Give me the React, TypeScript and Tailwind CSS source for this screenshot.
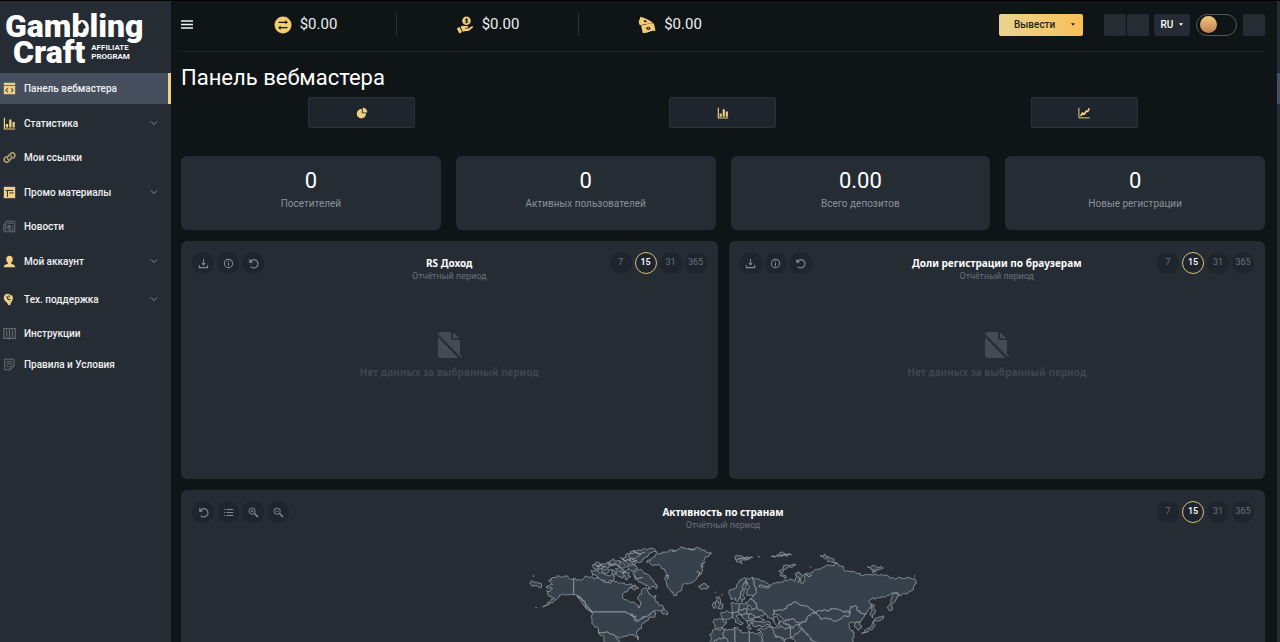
import { useState } from "react";
import type { ReactNode } from "react";

/* ---------- icons ---------- */

type IconName =
  | "panel" | "bars" | "link" | "layout" | "news" | "user" | "support" | "book" | "rules"
  | "pie" | "trend" | "download" | "info" | "undo" | "list" | "zoomIn" | "zoomOut";

const shapes: Record<IconName, ReactNode> = {
  panel: (
    <>
      <path d="M1 1h14v3H1zM1 5h14v10H1z" fill="currentColor" />
      <path d="M6 7.500 3.600 10 6 12.500M10 7.500 12.400 10 10 12.500" stroke="#464f5d" strokeWidth="1.300" fill="none" />
    </>
  ),
  bars: (
    <path d="M1 1h1.500v13H15v1.300H1zM3.500 8.500h2.800V13H3.500zM7.600 3h2.800v10H7.600zM11.700 6h2.800v7h-2.800z" fill="currentColor" />
  ),
  link: (
    <g fill="none" stroke="currentColor" strokeWidth="1.900" strokeLinecap="round">
      <path d="M6.300 10.300 A3 3 0 0 1 6.400 6.200L9.600 3A3.100 3.100 0 0 1 14 7.300L12.300 9" />
      <path d="M9.700 5.800A3 3 0 0 1 9.600 9.900L6.400 13A3.100 3.100 0 0 1 2 8.700L3.700 7" />
    </g>
  ),
  layout: (
    <>
      <path d="M1 1h14v14H1z" fill="currentColor" />
      <path d="M3 5.500h10M5.500 6v7.500M8 8.500h5" stroke="#252c34" strokeWidth="1.200" />
    </>
  ),
  news: (
    <>
      <path
        d="M3.500 1.500h11v13H2.500a1.500 1.500 0 0 1-1.500-1.500V5h2.500zM3.500 5v8M5.500 4h7M11 7.500h2M11 10h2M6 12.300h7"
        fill="none" stroke="currentColor" strokeWidth="1.200"
      />
      <path d="M5.500 6.500h4v4h-4z" fill="currentColor" />
    </>
  ),
  user: (
    <path
      d="M8 1c2.500 0 4 1.800 4 4.200 0 2-.9 3.600-2 4.300v1.200c2 .6 5 1.300 5 4.300H1c0-3 3-3.700 5-4.300V9.500C4.900 8.800 4 7.200 4 5.200 4 2.800 5.500 1 8 1z"
      fill="currentColor"
    />
  ),
  support: (
    <>
      <path d="M3 1.500 6.500 1 9 2l2.500 1.500C13 6 12 10 9.500 12.500c0 1.500-.7 2.500-2 2.500-1.300-.2-2-1.500-2.500-3C2 10.500 0 6.500 1.500 3.500z" fill="currentColor" />
      <path d="M5 3.500c-.3 3 1 5.200 4.500 4.700M7.500 2.800v2.700" stroke="#252c34" strokeWidth="1.300" fill="none" />
    </>
  ),
  book: (
    <path
      d="M1 2h5.500L8 3l1.500-1H15v12H9.500L8 15l-1.500-1H1zM8 3v12M4.500 4v8M11.500 4v8"
      fill="none" stroke="currentColor" strokeWidth="1.400"
    />
  ),
  rules: (
    <path
      d="M2 1.500h11.500V10L9 14.500H2zM9 14.500V10h4.500M4 4.500h7.500M4 7.200h7.500M4 10h3"
      fill="none" stroke="currentColor" strokeWidth="1.200"
    />
  ),
  pie: (
    <>
      <path d="M7.800 2.800V8.200H13.300A6.200 6.200 0 1 1 7.800 2.800z" fill="currentColor" />
      <path d="M9 1a6 6 0 0 1 6 6.200H9z" fill="currentColor" />
    </>
  ),
  trend: (
    <>
      <path d="M1.200 1v13.500H15.500" fill="none" stroke="currentColor" strokeWidth="1.300" />
      <path d="m3.500 12 2.500-4 2.700 1.200L11 5.500l2 .3 2-4" fill="none" stroke="currentColor" strokeWidth="2.200" />
    </>
  ),
  download: (
    <path d="M2 10v4h12v-4M8 1.500v8M5.500 7.500 8 10l2.500-2.500" fill="none" stroke="currentColor" strokeWidth="1.500" />
  ),
  info: (
    <g fill="none" stroke="currentColor" strokeWidth="1.500">
      <circle cx="8" cy="8" r="6" />
      <path d="M8 7v4.500M8 4.500v1.300" />
    </g>
  ),
  undo: (
    <path d="M2.500 2v4h4M3 6a6 6 0 1 1 1 6.500" fill="none" stroke="currentColor" strokeWidth="1.700" />
  ),
  list: (
    <path d="M1.500 3.500H3M5 3.500h10M1.500 8H3M5 8h10M1.500 12.500H3M5 12.500h10" stroke="currentColor" strokeWidth="1.500" />
  ),
  zoomIn: (
    <g fill="none" stroke="currentColor" strokeWidth="1.400">
      <circle cx="6" cy="6" r="4.500" />
      <path d="M6 4v4M4 6h4" />
      <path d="m9.500 9.500 5 5" strokeWidth="2.400" />
    </g>
  ),
  zoomOut: (
    <g fill="none" stroke="currentColor" strokeWidth="1.400">
      <circle cx="6" cy="6" r="4.500" />
      <path d="M4 6h4" />
      <path d="m9.500 9.500 5 5" strokeWidth="2.400" />
    </g>
  ),
};

function Icon({ name, className = "size-3" }: { name: IconName; className?: string }) {
  return (
    <svg viewBox="0 0 16 16" aria-hidden="true" className={className}>
      {shapes[name]}
    </svg>
  );
}

function ExchangeIcon() {
  return (
    <svg viewBox="0 0 18 18" aria-hidden="true" className="size-[18px]">
      <circle cx="9" cy="9" r="8.500" fill="#f3cb74" />
      <path d="M4.500 6.300h7.500M6 11.700h7.500" stroke="#14191b" strokeWidth="1.300" />
      <path d="M11.300 4.300 14 6.300l-2.700 2zM6.700 9.700 4 11.700l2.700 2z" fill="#14191b" />
    </svg>
  );
}

function HandCoinIcon() {
  return (
    <svg viewBox="0 0 18 18" aria-hidden="true" className="size-[18px]">
      <circle cx="10.500" cy="4.800" r="4.300" fill="#f3cb74" />
      <path d="M12 3.300h-2a.8.8 0 0 0 0 1.500h1a.8.8 0 0 1 0 1.600H9.200M10.500 2.300v5" stroke="#14191b" strokeWidth=".9" fill="none" />
      <path d="M.8 12.500 3.500 11l2.600 5-2.700 1.500z" fill="#f3cb74" />
      <path d="M4.500 10.700c1.500-1 3-1.300 4.500-.6h2.500c1 .2 1 1.500 0 1.700H9.300v.7h3l3.400-2.200c1.200-.4 2 .5 1.200 1.300l-4 3.200c-1.700.6-3.800 0-6 .9z" fill="#f3cb74" />
    </svg>
  );
}

function CashIcon() {
  return (
    <svg viewBox="0 0 18 18" aria-hidden="true" className="size-[18px]">
      <path d="M2.500.8c4 1.500 8 2.200 12.300 6.200l-2.500.2-10.500 2L.6 6z" fill="#f3cb74" />
      <path d="M3 9.300c4.500.5 8-3.300 13-1.600l1.500 7.300c-4.500-1.300-8 2.800-12.700 2z" fill="#f3cb74" />
      <ellipse cx="10.300" cy="12.300" rx="2" ry="1.600" fill="#14191b" />
      <path d="M6.300 4.100 9.200 5.200 7.800 6.300 5.700 5.700z" fill="#14191b" />
      <circle cx="10.300" cy="12.300" r=".7" fill="#f3cb74" />
    </svg>
  );
}

function NoFileIcon() {
  return (
    <svg viewBox="0 0 25 28" aria-hidden="true" className="h-7 w-[25px]">
      <path d="M4 1h10v5.500A2.500 2.500 0 0 0 16.500 9H23v15L2 2.500A3 3 0 0 1 4 1z" fill="#444b55" />
      <path d="M16 1.300 22.500 7.500H17a1 1 0 0 1-1-1z" fill="#444b55" />
      <path d="M1 6 21.500 27H4a3 3 0 0 1-3-3z" fill="#444b55" />
      <path d="M.8 2 24.500 26" stroke="#444b55" strokeWidth="1.600" />
      <path d="M.5 4 23 27" stroke="#252c34" strokeWidth="1.500" />
    </svg>
  );
}

/* ---------- world map ---------- */

type Point = [number, number];

const americas = [
  "100,130 112,125 130,128 161,133 161,182 150,182 140,184 128,180 118,188 105,198 90,206 68,218 88,203 103,194 95,188 82,180 80,170 90,172 97,165 78,160 82,155 98,152 85,140",
  "161,133 185,138 205,130 222,136 240,134 262,145 290,142 308,148 322,152 335,150 345,158 325,168 308,185 315,198 335,205 350,212 356,222 362,215 358,200 352,192 365,180 368,165 378,160 385,178 400,190 408,183 405,195 415,208 430,218 432,225 418,230 402,232 385,245 372,250 355,258 345,250 338,240 328,240 315,234 215,234 205,222 195,208 185,195 172,185 161,182",
  "215,234 315,234 328,240 338,246 345,260 358,258 372,250 385,245 402,232 408,240 400,250 385,258 375,265 365,278 355,290 350,302 355,318 345,305 325,303 305,310 285,305 270,300 250,296 235,290 222,275 216,255",
  "235,290 250,296 270,300 285,305 300,322 305,350 330,352 320,380 280,365 265,345 250,318",
  "425,236 432,226 440,232 442,242 428,240",
  "380,85 400,70 415,60 440,55 460,48 495,42 540,42 558,54 575,58 555,70 550,90 548,108 535,125 530,135 515,145 500,150 485,160 475,175 470,185 460,180 448,165 440,150 435,130 440,120 432,105 420,95 400,95",
  "535,157 545,152 560,152 568,158 560,166 545,167",
  "37,140 50,144 65,153 60,162 48,155 38,158",
  "213,110 225,107 238,118 250,117 262,124 278,122 283,134 265,145 245,138 232,132 218,124",
  "218,92 232,84 248,90 262,86 275,95 262,102 243,98 232,104 220,101",
  "268,82 282,76 300,80 308,90 296,98 280,94",
  "286,104 300,98 312,108 320,122 305,133 292,125",
  "318,62 340,50 370,46 405,47 412,55 385,64 370,74 362,84 345,92 322,88 308,78",
  "320,95 345,95 352,105 338,112 322,108",
  "330,58 350,56 362,62 345,74 328,70",
  "338,118 358,108 372,118 388,125 400,138 412,153 408,165 395,158 385,165 374,150 358,145 345,135",
  "330,160 345,152 356,162 345,168",
  "232,98 245,94 256,99 246,105",
  "300,84 312,88 318,98 306,102 298,94",
  "312,112 326,114 332,128 322,138 314,126",
  "244,108 258,106 268,112 256,118",
  "272,106 284,110 288,120 276,118",
];

const eurasia = [
  "57,175 70,165 80,152 90,138 105,130 108,140 98,155 92,175 90,192 82,203 77,192 62,195",
  "90,192 92,175 98,155 108,140 115,148 108,165 102,178 104,190 96,203",
  "108,140 125,130 133,142 138,168 126,185 112,186 110,174 120,160",
  "133,142 128,130 138,133 152,140 175,150 180,156 165,160 150,152 146,158 156,161 175,158 187,150 210,143 235,138 255,142 255,120 265,112 273,120 275,150 285,140 280,125 300,120 312,110 340,100 365,95 385,90 400,97 402,108 420,112 450,118 452,125 480,122 500,122 545,132 575,133 600,132 615,135 612,165 600,172 580,178 565,183 558,175 530,185 490,190 477,205 485,218 470,238 455,238 435,215 422,218 420,232 400,235 370,225 345,228 318,235 290,215 265,208 235,213 230,222 190,228 190,240 202,252 192,262 172,252 165,240 140,222 132,205 120,195 130,188 138,168",
  "565,178 560,195 548,222 538,230 536,215 545,192 555,178",
  "206,112 220,102 240,94 258,92 240,99 226,106 216,118 228,132 212,126",
  "190,228 230,222 235,213 265,208 290,215 318,235 295,245 290,258 265,265 245,255 225,262 210,248 190,240",
  "318,235 345,228 370,225 400,235 420,235 412,248 380,262 340,255",
  "318,235 340,255 380,262 412,248 420,232 422,218 435,215 455,238 468,238 462,250 450,262 435,268 420,265 418,280 432,300 425,325 405,345 360,350 320,325 295,308 275,285 268,270 290,258 295,245",
  "435,268 450,262 455,275 445,290 438,282",
  "482,210 494,215 495,235 488,252 482,235",
  "455,300 465,288 480,282 488,265 495,258 496,275 485,288 470,294",
  "492,258 505,252 520,245 505,260",
  "225,262 245,255 265,265 268,275 252,280 235,272",
  "210,260 225,270 240,282 225,285 210,275",
  "185,278 205,280 225,285 240,282 242,305 225,320 195,305",
  "240,282 268,272 278,285 262,300 255,312 242,305",
  "262,300 278,285 298,308 320,325 350,345 310,400 280,370 255,330 242,312",
  "130,265 150,262 180,264 185,278 165,276 140,280 128,275",
  "150,282 185,278 195,305 225,325 210,350 175,345 155,310",
  "12,257 38,257 50,263 40,275 30,282 14,280",
  "34,235 50,230 65,236 64,252 48,260 38,256",
  "62,210 72,206 86,210 88,228 72,236 64,230",
  "86,210 108,206 116,214 110,226 88,228",
  "108,206 120,195 132,205 140,222 125,224 114,216",
  "110,226 140,222 165,240 152,245 140,250 125,240 112,240",
  "88,228 110,226 112,240 98,243 86,236",
  "64,238 86,236 92,243 78,246 92,262 100,268 90,272 76,256 66,250",
  "92,243 112,240 116,252 128,258 126,268 108,260 98,252",
  "110,262 126,266 118,276 124,285 112,282",
  "116,244 126,240 138,252 128,258 118,254",
  "18,190 28,188 32,200 40,212 38,222 24,224 28,212 18,202",
  "8,210 18,206 20,218 10,222",
  "0,300 14,286 35,282 42,286 42,312 28,312 0,330",
  "42,286 74,280 76,340 42,312",
  "74,280 84,286 96,298 118,292 118,360 76,345",
  "118,292 150,296 160,330 170,360 118,360",
  "0,330 28,312 42,312 76,345 118,360 170,360 190,400 140,500 80,500 40,400 0,380",
  "75,72 92,66 110,70 108,78 92,80 96,90 84,84",
  "112,68 128,70 118,76",
  "184,66 202,62 208,68 192,69",
  "206,60 222,58 245,62 232,68 214,68",
  "330,66 345,60 356,68 345,76",
  "352,76 368,74 382,88 364,84",
  "472,98 500,100 520,102 500,106 482,102",
  "486,110 500,112 490,118",
];

/* Splits short edges at a displaced midpoint. The shift depends on the midpoint only, so shared borders stay shared. */
function roughen([x, y]: Point, [nx, ny]: Point): Point[] {
  const length = Math.hypot(nx - x, ny - y);
  if (length > 48 || length < 8) return [[x, y]];
  const mx = (x + nx) / 2;
  const my = (y + ny) / 2;
  const reach = Math.min(length * 0.28, 4);
  const middle: Point = [mx + Math.sin(mx * 12.9 + my) * reach, my + Math.cos(my * 7.3 + mx) * reach];
  return [...roughen([x, y], middle), ...roughen(middle, [nx, ny])];
}

function toPath(source: string) {
  const points = source.split(" ").map((pair) => pair.split(",").map(Number) as Point);
  const outline = points.flatMap((point, i) => roughen(point, points[(i + 1) % points.length]));
  return `M${outline.map(([x, y]) => `${x.toFixed(1)} ${y.toFixed(1)}`).join("L")}Z`;
}

function WorldMap() {
  return (
    <svg viewBox="0 0 1221 540" role="img" aria-label="Активность по странам" className="mx-auto mt-0.5 h-[180px] w-[407px] shrink-0">
      <g fill="#36414c" stroke="#989ea4" strokeWidth="2.400" strokeLinejoin="round">
        {americas.map((shape) => <path key={shape} d={toPath(shape)} />)}
        <path d="M170 184 182 190 190 202 204 218 217 235 200 225 188 208ZM330 242 340 248 350 246M342 252 350 262M362 255 372 246M38 126h5M46 221h4M225 92l12 6 10-8M262 84l14 8 12-4 8 8M300 70l15 10 20-6 15 8M296 110l16 8 8-10M340 124l12 10 16-4M436 126l10-2-4 12M530 112l10 4-6 12M505 44l20 4M550 84l-8 10 6 8M455 52l12-2M340 52l20 8 16-6M325 78l14 6 12-6" fill="none" strokeWidth="3" />
        <g transform="translate(570 0)">
          {eurasia.map((shape) => <path key={shape} d={toPath(shape)} />)}
          <path d="M190 252 200 246 208 262 202 278 194 268Z" fill="#252c34" />
          <path d="M130 252 146 250 164 258 150 263 132 262Z" fill="#252c34" />
          <path d="M16 175h3M34 184l4-3M144 68h5M300 97l3 4M612 126h4M140 288h8M285 120l12 8 8-4M262 125l8 10-6 12M80 76l20-4 14 6M210 64l24-2" fill="none" strokeWidth="3" />
        </g>
      </g>
    </svg>
  );
}

/* ---------- sidebar ---------- */

interface NavItem {
  label: string;
  icon: IconName;
  active?: boolean;
  expandable?: boolean;
  tone: string;
}

const gold = "text-[#efd084]";
const dim = "text-[#686d73]";

const navItems: NavItem[] = [
  { label: "Панель вебмастера", icon: "panel", active: true, tone: gold },
  { label: "Статистика", icon: "bars", expandable: true, tone: gold },
  { label: "Мои ссылки", icon: "link", tone: "text-[#b3a173]" },
  { label: "Промо материалы", icon: "layout", expandable: true, tone: gold },
  { label: "Новости", icon: "news", tone: dim },
  { label: "Мой аккаунт", icon: "user", expandable: true, tone: gold },
  { label: "Тех. поддержка", icon: "support", expandable: true, tone: gold },
  { label: "Инструкции", icon: "book", tone: dim },
  { label: "Правила и Условия", icon: "rules", tone: dim },
];

function Logo() {
  return (
    <a href="#" className="relative block h-[72px] shrink-0 pt-3 pl-[5px] font-black text-white">
      <span className="block text-[32px] leading-[26px]">Gambling</span>
      <span className="flex items-center gap-1.5 pl-2">
        <span className="text-[32px] leading-[26px]">Craft</span>
        <span className="text-[8px] leading-[9px] font-semibold">
          AFFILIATE
          <br />
          PROGRAM
        </span>
      </span>
      <svg viewBox="0 0 10 12" aria-hidden="true" className="absolute top-[20px] left-[78px] h-2.5 w-2">
        <path d="M5 0C6 3 9.500 4.500 9.500 7.500 9.500 9.500 7 10 5.700 8.700L6.500 12h-3l.8-3.300C3 10 .5 9.500.5 7.500.5 4.500 4 3 5 0z" fill="#252c34" />
      </svg>
    </a>
  );
}

function Sidebar() {
  return (
    <aside className="flex w-[171px] shrink-0 flex-col bg-[#252c34]">
      <Logo />
      <nav>
        {navItems.map((item) => (
          <a
            key={item.label}
            href="#"
            aria-current={item.active ? "page" : undefined}
            className={`flex items-center gap-2 pr-3 pl-[3px] text-[10px] font-medium text-[#f0f1f2] ${
              item.expandable ? "h-[38px]" : "h-[31px]"
            } ${item.active ? "border-r-[3px] border-[#efd084] bg-[#464f5d]" : ""}`}
          >
            <Icon name={item.icon} className={`size-[13px] ${item.tone}`} />
            <span className="grow">{item.label}</span>
            {item.expandable && (
              <svg viewBox="0 0 10 10" aria-hidden="true" className="size-2.5 text-[#8b9096]">
                <path d="M2 3.500 5 6.500l3-3" fill="none" stroke="currentColor" />
              </svg>
            )}
          </a>
        ))}
      </nav>
    </aside>
  );
}

/* ---------- header ---------- */

const balances = [
  { label: "Баланс", icon: <ExchangeIcon /> },
  { label: "Выплаты", icon: <HandCoinIcon /> },
  { label: "Доход", icon: <CashIcon /> },
];

function Header() {
  const [night, setNight] = useState(false);
  return (
    <header className="flex h-[51px] shrink-0 items-center border-b border-[#1b2124] pb-[3px]">
      <button type="button" aria-label="Меню" className="w-[34px]">
        <svg viewBox="0 0 12 9" aria-hidden="true" className="h-[9px] w-3">
          <path d="M0 1h12M0 4.500h12M0 8h12" stroke="#f2f3f3" strokeWidth="1.300" />
        </svg>
      </button>
      <ul className="flex grow">
        {balances.map((balance, i) => (
          <li
            key={balance.label}
            className={`flex h-[23px] w-[182px] items-center justify-center gap-2 text-[15px] text-[#eceeef] ${
              i < 2 ? "border-r border-[#2b3137]" : ""
            }`}
          >
            {balance.icon}
            $0.00
          </li>
        ))}
      </ul>
      <button
        type="button"
        className="flex h-[22px] w-[84px] items-center justify-between rounded-xs bg-linear-to-r from-[#e9d48f] to-[#f9bf55] pr-2 pl-[15px] text-[10px] font-medium text-[#23231d]"
      >
        Вывести
        <svg viewBox="0 0 6 4" aria-hidden="true" className="h-[3px] w-1">
          <path d="M0 0h6L3 4z" fill="#1a1a16" />
        </svg>
      </button>
      <div className="ml-[21px] flex gap-px">
        <button type="button" aria-label="Уведомления" className="size-[22px] rounded-xs bg-[#252c34]" />
        <button type="button" aria-label="Сообщения" className="size-[22px] rounded-xs bg-[#252c34]" />
      </div>
      <button
        type="button"
        className="ml-[5px] flex h-[22px] w-9 items-center justify-center gap-1.5 rounded-xs bg-[#252c34] text-[10px] font-medium text-white"
      >
        RU
        <svg viewBox="0 0 6 4" aria-hidden="true" className="h-[3px] w-1">
          <path d="M0 0h6L3 4z" fill="#fff" />
        </svg>
      </button>
      <button
        type="button"
        role="switch"
        aria-checked={night}
        aria-label="Тема"
        onClick={() => setNight(!night)}
        className={`ml-1.5 flex h-[22px] w-[41px] items-center rounded-full border border-[#54585c] px-[3px] ${night ? "justify-end" : ""}`}
      >
        <span className="size-[17px] rounded-full bg-linear-to-b from-[#eec87d] to-[#c47f55]" />
      </button>
      <button type="button" aria-label="Профиль" className="ml-1.5 size-[22px] rounded-xs bg-[#252c34]" />
    </header>
  );
}

/* ---------- panels ---------- */

const periods = [7, 15, 31, 365];

interface Tool {
  icon: IconName;
  label: string;
}

const chartTools: Tool[] = [
  { icon: "download", label: "Скачать" },
  { icon: "info", label: "Информация" },
  { icon: "undo", label: "Обновить" },
];

const mapTools: Tool[] = [
  { icon: "undo", label: "Обновить" },
  { icon: "list", label: "Список" },
  { icon: "zoomIn", label: "Увеличить" },
  { icon: "zoomOut", label: "Уменьшить" },
];

function Panel({ title, tools, className, children }: { title: string; tools: Tool[]; className: string; children: ReactNode }) {
  const [period, setPeriod] = useState(15);
  return (
    <section className={`flex flex-col rounded-md bg-[#252c34] px-[11px] pt-[11px] ${className}`}>
      <div className="grid grid-cols-[1fr_auto_1fr]">
        <div className="flex gap-[3px]">
          {tools.map((tool) => (
            <button
              key={tool.label}
              type="button"
              aria-label={tool.label}
              className="flex size-[22px] items-center justify-center rounded-full bg-[#1f252d] text-[#858a90]"
            >
              <Icon name={tool.icon} className="size-[11px]" />
            </button>
          ))}
        </div>
        <div className="pt-1 text-center">
          <h2 className="font-['Noto_Sans'] text-[10px] leading-[14px] font-bold text-white">{title}</h2>
          <p className="text-[9px] leading-[13px] text-[#6b7179]">Отчётный период</p>
        </div>
        <div className="flex justify-end gap-[3px]">
          {periods.map((days) => (
            <button
              key={days}
              type="button"
              onClick={() => setPeriod(days)}
              className={`flex size-[22px] items-center justify-center rounded-full bg-[#1f252d] text-[9px] ${
                days === period ? "border border-[#d9bf7c] font-medium text-white" : "text-[#6d7279]"
              }`}
            >
              {days}
            </button>
          ))}
        </div>
      </div>
      {children}
    </section>
  );
}

function EmptyChart() {
  return (
    <div className="flex flex-col items-center gap-1.5 pt-12">
      <NoFileIcon />
      <p className="font-['Noto_Sans'] text-[10px] leading-[14px] font-bold text-[#3f4650]">Нет данных за выбранный период</p>
    </div>
  );
}

const views: Tool[] = [
  { icon: "pie", label: "Обзор" },
  { icon: "bars", label: "Показатели" },
  { icon: "trend", label: "Динамика" },
];

const totals = [
  { value: "0", label: "Посетителей" },
  { value: "0", label: "Активных пользователей" },
  { value: "0.00", label: "Всего депозитов" },
  { value: "0", label: "Новые регистрации" },
];

export default function App() {
  return (
    <div className="flex h-screen overflow-hidden border-t border-black bg-[#0f1416] font-[Roboto,'Noto_Sans',sans-serif] text-white">
      <Sidebar />
      <main className="flex min-w-0 grow flex-col pr-3 pl-2.5">
        <Header />
        <h1 className="mt-[11px] text-[22px] leading-[30px]">Панель вебмастера</h1>
        <div className="mt-1 grid shrink-0 grid-cols-3 justify-items-center">
          {views.map((view) => (
            <button
              key={view.label}
              type="button"
              aria-label={view.label}
              className="flex h-[31px] w-[107px] items-center justify-center rounded-xs border border-[#2a323b] bg-[#1f252d] text-[#efd084]"
            >
              <Icon name={view.icon} />
            </button>
          ))}
        </div>
        <div className="mt-7 grid shrink-0 grid-cols-4 gap-[15px]">
          {totals.map((total) => (
            <div key={total.label} className="h-[74px] rounded-md bg-[#252c34] pt-[11px] text-center">
              <p className="text-[22px] leading-7">{total.value}</p>
              <p className="mt-px text-[10px] leading-4 text-[#8c929a]">{total.label}</p>
            </div>
          ))}
        </div>
        <div className="mt-[11px] grid shrink-0 grid-cols-2 gap-[11px]">
          <Panel title="RS Доход" tools={chartTools} className="h-[238px]">
            <EmptyChart />
          </Panel>
          <Panel title="Доли регистрации по браузерам" tools={chartTools} className="h-[238px]">
            <EmptyChart />
          </Panel>
        </div>
        <Panel title="Активность по странам" tools={mapTools} className="mt-[11px] shrink-0">
          <WorldMap />
        </Panel>
      </main>
      <div aria-hidden="true" className="w-[3px] shrink-0 bg-[#252c34] pt-[72px]">
        <div className="h-[31px] bg-[#464f5d]" />
      </div>
    </div>
  );
}
